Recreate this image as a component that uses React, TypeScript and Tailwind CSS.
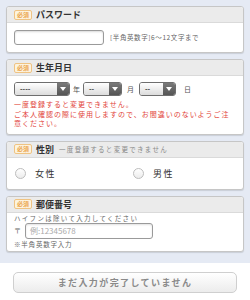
const font = { fontFamily: '"Noto Sans CJK JP", "Noto Sans", sans-serif' }

function Badge() {
  return (
    <span className="flex h-[10px] items-center rounded-[2px] border border-[#efc383] bg-[#fdf3de] px-[2px] text-[6px] leading-none font-bold text-[#eba650]">
      必須
    </span>
  )
}

function CardHeader({ title, note }: { title: string; note?: string }) {
  return (
    <div className="flex h-[16px] items-center gap-[4px] border-b border-[#dadada] bg-[#ebebeb] px-[7px]">
      <Badge />
      <span className="text-[9px] leading-none font-bold text-[#333]">{title}</span>
      {note && <span className="ml-[1px] text-[6.5px] leading-none tracking-[1.3px] text-[#888]">{note}</span>}
    </div>
  )
}

function Card({ children }: { children: React.ReactNode }) {
  return (
    <div className="overflow-hidden rounded-[3px] border border-[#c6c6c6] bg-white shadow-[0_1px_1px_rgba(0,0,0,0.12)]">
      {children}
    </div>
  )
}

function Select({ text, width }: { text: string; width: string }) {
  return (
    <div className={`flex h-[14px] ${width} overflow-hidden rounded-[3px] border border-[#6e6e6e]`}>
      <div className="flex flex-1 items-center bg-gradient-to-b from-white to-[#dcdcdc] pl-[5px] text-[7px] leading-none font-bold text-[#333]">
        {text}
      </div>
      <div className="flex w-[12px] items-center justify-center bg-gradient-to-b from-[#7a7a7a] to-[#555]">
        <span className="h-0 w-0 border-x-[3px] border-t-[4px] border-x-transparent border-t-white" />
      </div>
    </div>
  )
}

function Radio({ label }: { label: string }) {
  return (
    <div className="flex items-center gap-[9px] pl-[8px]">
      <span className="h-[11px] w-[11px] rounded-full border border-[#bdbdbd] bg-gradient-to-b from-white to-[#ececec]" />
      <span className="text-[9px] leading-none tracking-[1.5px] text-[#333]">{label}</span>
    </div>
  )
}

export default function App() {
  return (
    <div className="h-[300px] w-[250px] bg-white" style={font}>
      <div className="flex flex-col gap-[6px] bg-[#e5eaf4] px-[6px] pt-[6px] pb-[11px]">
        <Card>
          <CardHeader title="パスワード" />
          <div className="flex h-[29px] items-center gap-[6px] px-[7px]">
            <div className="h-[15px] w-[90px] rounded-[3px] border border-[#9a9a9a] shadow-[inset_0_1px_2px_rgba(0,0,0,0.15)]" />
            <span className="text-[6.5px] leading-none tracking-[0.6px] text-[#666]">[半角英数字]6〜12文字まで</span>
          </div>
        </Card>

        <Card>
          <CardHeader title="生年月日" />
          <div className="px-[7px] pt-[6px] pb-[5px]">
            <div className="flex items-center text-[7px] leading-none text-[#555]">
              <Select text="----" width="w-[56px]" />
              <span className="w-[13px] text-center">年</span>
              <Select text="--" width="w-[39px]" />
              <span className="w-[17px] text-center">月</span>
              <Select text="--" width="w-[37px]" />
              <span className="ml-[8px]">日</span>
            </div>
            <p className="mt-[4px] text-[7px] leading-[9.5px] tracking-[1px] text-[#e2453a]">
              一度登録すると変更できません。
              <br />
              ご本人確認の際に使用しますので、お間違いのないようご注意ください。
            </p>
          </div>
        </Card>

        <Card>
          <CardHeader title="性別" note="一度登録すると変更できません" />
          <div className="grid h-[31px] grid-cols-2 items-center">
            <Radio label="女性" />
            <Radio label="男性" />
          </div>
        </Card>

        <Card>
          <CardHeader title="郵便番号" />
          <div className="px-[7px] pt-[1px] pb-[2px]">
            <p className="text-[6.5px] leading-[9px] tracking-[1.3px] text-[#666]">ハイフンは除いて入力してください</p>
            <div className="flex items-center gap-[4px]">
              <span className="text-[7px] leading-none text-[#666]">〒</span>
              <div className="flex h-[16px] w-[128px] items-center rounded-[3px] border border-[#9a9a9a] pl-[4px] text-[8px] leading-none text-[#aaa] shadow-[inset_0_1px_2px_rgba(0,0,0,0.12)]">
                例:12345678
              </div>
            </div>
            <p className="mt-[1px] text-[6.5px] leading-[9px] tracking-[0.8px] text-[#666]">※半角英数字入力</p>
          </div>
        </Card>
      </div>

      <div className="px-[13px] pt-[9px]">
        <div className="flex h-[21px] items-center justify-center rounded-[5px] border border-[#cfcfcf] bg-gradient-to-b from-white to-[#ececec] text-[9px] leading-none font-bold tracking-[1.4px] text-[#8a8a8a]">
          まだ入力が完了していません
        </div>
      </div>
    </div>
  )
}
